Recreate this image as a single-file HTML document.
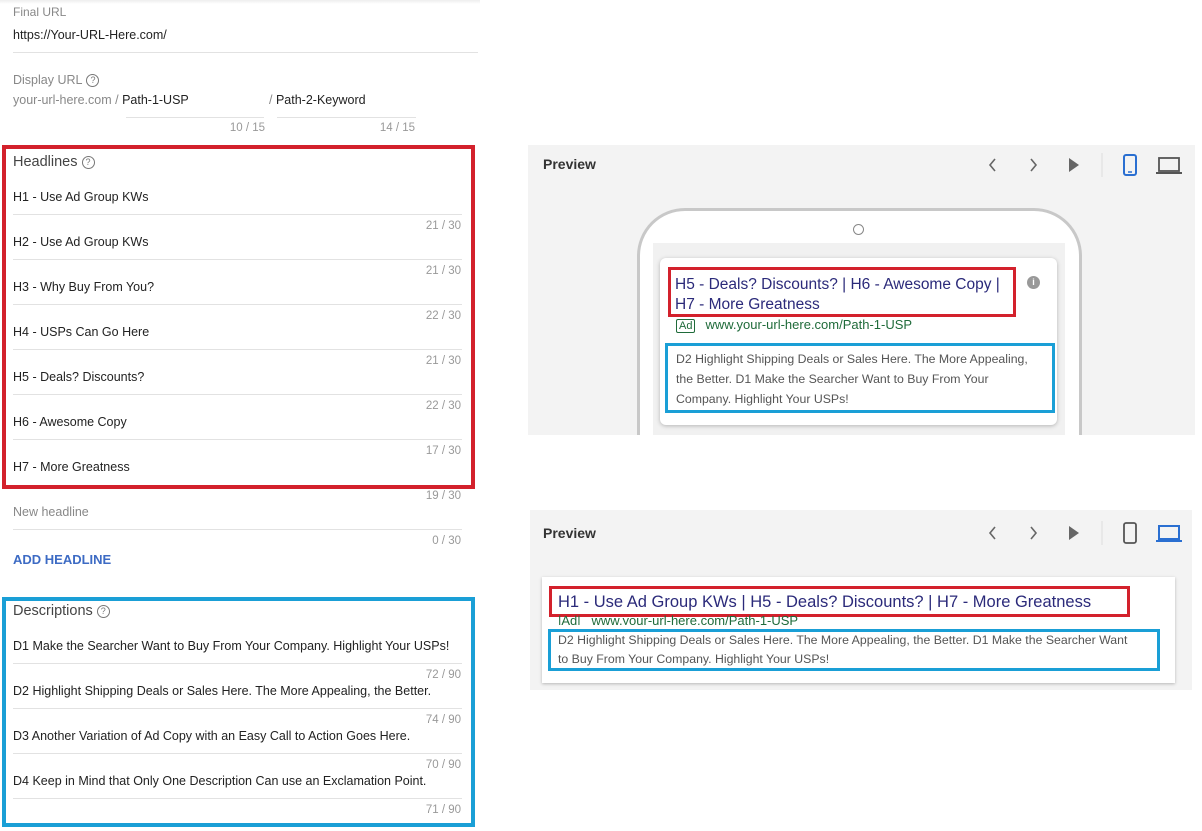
<!DOCTYPE html>
<html><head><style>
*{margin:0;padding:0;box-sizing:border-box}
body{width:1202px;height:831px;background:#fff;font-family:"Liberation Sans",sans-serif;position:relative;overflow:hidden;color:#222}
.a{position:absolute;white-space:nowrap}
.lbl{font-size:12px;color:#888}
.val{font-size:12.5px;color:#222}
.ln{position:absolute;height:1px;background:#e2e2e2}
.cnt{position:absolute;font-size:11.5px;color:#999;text-align:right;width:60px}
.q{display:inline-block;width:13px;height:13px;border:1.3px solid #777;border-radius:50%;font-size:9px;line-height:11px;text-align:center;color:#777;vertical-align:1px;margin-left:4px}
.box{position:absolute;border-style:solid}
.red{border-color:#d3212c}
.blue{border-color:#1a9fd6}
</style></head><body>
<div style="position:absolute;left:0;top:0;width:480px;height:4px;background:linear-gradient(#eee,#fff)"></div>
<div class="a lbl" style="left:13px;top:5px">Final URL</div>
<div class="a val" style="left:13px;top:28px">https://Your-URL-Here.com/</div>
<div class="ln" style="left:13px;top:52px;width:465px"></div>
<div class="a lbl" style="left:13px;top:73px;font-size:12.5px">Display URL<span class="q">?</span></div>
<div class="a lbl" style="left:13px;top:93px;font-size:12.5px">your-url-here.com / <span style="color:#222">Path-1-USP</span></div>
<div class="a lbl" style="left:269px;top:93px;font-size:12.5px">/ <span style="color:#222">Path-2-Keyword</span></div>
<div class="ln" style="left:126px;top:117px;width:138px"></div>
<div class="ln" style="left:277px;top:117px;width:139px"></div>
<div class="cnt" style="left:205px;top:122px">10 / 15</div>
<div class="cnt" style="left:355px;top:122px">14 / 15</div>

<div class="box red" style="left:2px;top:145px;width:473px;height:344px;border-width:4px"></div>
<div class="a" style="left:13px;top:154px;font-size:14.5px;color:#444">Headlines<span class="q">?</span></div>

<div class="a val" style="left:13px;top:190px">H1 - Use Ad Group KWs</div>
<div class="ln" style="left:13px;top:214px;width:449px"></div><div class="cnt" style="left:401px;top:220px">21 / 30</div>
<div class="a val" style="left:13px;top:235px">H2 - Use Ad Group KWs</div>
<div class="ln" style="left:13px;top:259px;width:449px"></div><div class="cnt" style="left:401px;top:265px">21 / 30</div>
<div class="a val" style="left:13px;top:280px">H3 - Why Buy From You?</div>
<div class="ln" style="left:13px;top:304px;width:449px"></div><div class="cnt" style="left:401px;top:310px">22 / 30</div>
<div class="a val" style="left:13px;top:325px">H4 - USPs Can Go Here</div>
<div class="ln" style="left:13px;top:349px;width:449px"></div><div class="cnt" style="left:401px;top:355px">21 / 30</div>
<div class="a val" style="left:13px;top:370px">H5 - Deals? Discounts?</div>
<div class="ln" style="left:13px;top:394px;width:449px"></div><div class="cnt" style="left:401px;top:400px">22 / 30</div>
<div class="a val" style="left:13px;top:415px">H6 - Awesome Copy</div>
<div class="ln" style="left:13px;top:439px;width:449px"></div><div class="cnt" style="left:401px;top:445px">17 / 30</div>
<div class="a val" style="left:13px;top:460px">H7 - More Greatness</div>
<div class="cnt" style="left:401px;top:490px">19 / 30</div>
<div class="a lbl" style="left:13px;top:505px;font-size:12.5px">New headline</div>
<div class="ln" style="left:13px;top:529px;width:449px"></div><div class="cnt" style="left:401px;top:535px">0 / 30</div>
<div class="a" style="left:13px;top:552px;font-size:13px;font-weight:bold;color:#3d6bc4">ADD HEADLINE</div>

<div class="box blue" style="left:2px;top:597px;width:473px;height:230px;border-width:4px"></div>
<div class="a" style="left:13px;top:603px;font-size:14.5px;color:#444">Descriptions<span class="q">?</span></div>
<div class="a val" style="left:13px;top:639px">D1 Make the Searcher Want to Buy From Your Company. Highlight Your USPs!</div>
<div class="ln" style="left:13px;top:663px;width:449px"></div><div class="cnt" style="left:401px;top:669px">72 / 90</div>
<div class="a val" style="left:13px;top:684px">D2 Highlight Shipping Deals or Sales Here. The More Appealing, the Better.</div>
<div class="ln" style="left:13px;top:708px;width:449px"></div><div class="cnt" style="left:401px;top:714px">74 / 90</div>
<div class="a val" style="left:13px;top:729px">D3 Another Variation of Ad Copy with an Easy Call to Action Goes Here.</div>
<div class="ln" style="left:13px;top:753px;width:449px"></div><div class="cnt" style="left:401px;top:759px">70 / 90</div>
<div class="a val" style="left:13px;top:774px">D4 Keep in Mind that Only One Description Can use an Exclamation Point.</div>
<div class="ln" style="left:13px;top:798px;width:449px"></div><div class="cnt" style="left:401px;top:804px">71 / 90</div>

<!-- Preview 1 -->
<div style="position:absolute;left:528px;top:145px;width:667px;height:290px;background:#f3f3f3;overflow:hidden">
 <div class="a" style="left:15px;top:11px;font-size:14px;font-weight:bold;color:#333">Preview</div>
 <svg class="a" style="left:455px;top:8px" width="210" height="24" viewBox="0 0 210 24">
  <path d="M12 6l-5 6 5 6" fill="none" stroke="#666" stroke-width="1.6"/>
  <path d="M48 6l5 6-5 6" fill="none" stroke="#666" stroke-width="1.6"/>
  <path d="M86 5l10 7-10 7z" fill="#666"/>
  <line x1="119" y1="0" x2="119" y2="30" stroke="#ddd"/>
  <rect x="141" y="2" width="12" height="20" rx="2" fill="none" stroke="#2a6fd1" stroke-width="2"/><line x1="145" y1="19" x2="149" y2="19" stroke="#2a6fd1" stroke-width="1.5"/>
  <rect x="176" y="5" width="20" height="13" fill="none" stroke="#555" stroke-width="1.8"/><line x1="173" y1="20" x2="199" y2="20" stroke="#555" stroke-width="2"/>
 </svg>
 <div style="position:absolute;left:109px;top:63px;width:445px;height:300px;border:3px solid #c8c8c8;border-radius:48px;background:#fff"></div>
 <div style="position:absolute;left:325px;top:79px;width:11px;height:11px;border:1px solid #888;border-radius:50%"></div>
 <div style="position:absolute;left:125px;top:98px;width:412px;height:200px;background:#f1f1f1"></div>
 <div style="position:absolute;left:132px;top:113px;width:397px;height:167px;background:#fff;border-radius:6px;box-shadow:0 1px 4px rgba(0,0,0,.25)"></div>
 <div class="a" style="left:147px;top:130px;font-size:15.5px;line-height:20px;color:#2b2a7a">H5 - Deals? Discounts? | H6 - Awesome Copy |<br>H7 - More Greatness</div>
 <div class="box red" style="left:140px;top:122px;width:348px;height:50px;border-width:3px"></div>
 <div style="position:absolute;left:499px;top:131px;width:13px;height:13px;border-radius:50%;background:#999;color:#fff;font-size:9px;text-align:center;line-height:13px;font-weight:bold">i</div>
 <div class="a" style="left:148px;top:172px;font-size:13px;color:#1f6b3a"><span style="border:1px solid #1f6b3a;font-size:11px;padding:0 2px;border-radius:2px;margin-right:10px">Ad</span>www.your-url-here.com/Path-1-USP</div>
 <div class="a" style="left:148px;top:204px;font-size:12.3px;line-height:20px;color:#555">D2 Highlight Shipping Deals or Sales Here. The More Appealing,<br>the Better. D1 Make the Searcher Want to Buy From Your<br>Company. Highlight Your USPs!</div>
 <div class="box blue" style="left:137px;top:198px;width:390px;height:70px;border-width:3px"></div>
</div>

<!-- Preview 2 -->
<div style="position:absolute;left:530px;top:510px;width:662px;height:180px;background:#f3f3f3">
 <div class="a" style="left:13px;top:15px;font-size:14px;font-weight:bold;color:#333">Preview</div>
 <svg class="a" style="left:453px;top:11px" width="210" height="24" viewBox="0 0 210 24">
  <path d="M12 6l-5 6 5 6" fill="none" stroke="#666" stroke-width="1.6"/>
  <path d="M48 6l5 6-5 6" fill="none" stroke="#666" stroke-width="1.6"/>
  <path d="M86 5l10 7-10 7z" fill="#666"/>
  <line x1="119" y1="-5" x2="119" y2="30" stroke="#ddd"/>
  <rect x="141" y="2" width="12" height="20" rx="2" fill="none" stroke="#555" stroke-width="1.8"/>
  <rect x="176" y="5" width="20" height="13" fill="none" stroke="#2a6fd1" stroke-width="2"/><line x1="173" y1="20" x2="199" y2="20" stroke="#2a6fd1" stroke-width="2"/>
 </svg>
 <div style="position:absolute;left:12px;top:67px;width:633px;height:106px;background:#fff;box-shadow:0 1px 3px rgba(0,0,0,.25)"></div>
 <div class="box red" style="left:19px;top:76px;width:581px;height:31px;border-width:3px"></div>
 <div class="a" style="left:28px;top:83px;font-size:16.5px;color:#2b2a7a">H1 - Use Ad Group KWs | H5 - Deals? Discounts? | H7 - More Greatness</div>
 <div class="a" style="left:28px;top:103px;font-size:13px;color:#1f6b3a;height:12px;overflow:hidden">|Ad|&nbsp;&nbsp; www.your-url-here.com/Path-1-USP</div>
 <div class="box blue" style="left:18px;top:119px;width:612px;height:42px;border-width:3px"></div>
 <div class="a" style="left:28px;top:121px;font-size:12.3px;line-height:19px;color:#555">D2 Highlight Shipping Deals or Sales Here. The More Appealing, the Better. D1 Make the Searcher Want<br>to Buy From Your Company. Highlight Your USPs!</div>
</div>
</body></html>
